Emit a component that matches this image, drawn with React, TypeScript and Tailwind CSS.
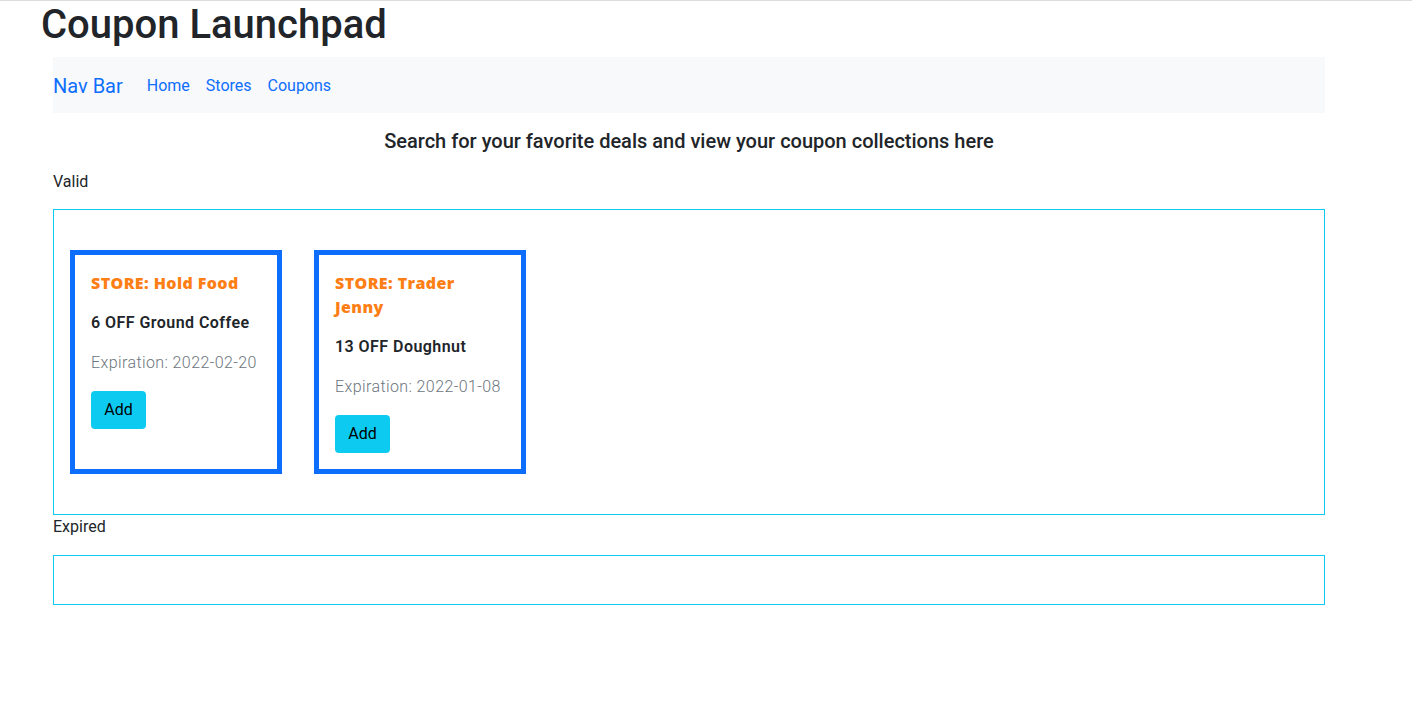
import React from "react";

const coupons = [
  { store: "Hold Food", title: "6 OFF Ground Coffee", exp: "2022-02-20" },
  { store: "Trader Jenny", title: "13 OFF Doughnut", exp: "2022-01-08" },
];

function Card({ store, title, exp }: { store: string; title: string; exp: string }) {
  return (
    <div className="w-[212px] border-[5px] border-[#0d6efd] p-4 flex flex-col items-start">
      <div className="max-w-[160px] text-[16px] leading-6 font-extrabold tracking-[0.4px] text-[#fd7e14] font-['Open_Sans','Roboto',sans-serif]">STORE: {store}</div>
      <div className="mt-4 text-[16px] leading-6 font-semibold tracking-[0.45px] text-[#212529]">{title}</div>
      <div className="mt-4 text-[16px] leading-6 font-light tracking-[0.4px] text-[#6c757d]">Expiration: {exp}</div>
      <button className="mt-4 h-[38px] w-[55px] rounded-[4px] bg-[#0dcaf0] text-[16px] text-black">Add</button>
    </div>
  );
}

export default function App() {
  return (
    <div className="min-h-[717px] bg-white border-t border-[#dcdcdc] text-[#212529] font-['Roboto','Noto_Sans',sans-serif]">
      <h1 className="ml-[41px] text-[40px] leading-[48px] font-medium mb-2">Coupon Launchpad</h1>
      <div className="mx-[53px] w-[1272px]">
        <nav className="h-14 bg-[#f8f9fa] flex items-center pt-px">
          <span className="text-[20px] text-[#0d6efd] mr-4">Nav Bar</span>
          <a className="px-2 text-[16px] text-[#0d6efd]">Home</a>
          <a className="px-2 text-[16px] text-[#0d6efd]">Stores</a>
          <a className="px-2 text-[16px] text-[#0d6efd]">Coupons</a>
        </nav>
        <h2 className="mt-4 text-center text-[20px] leading-6 font-medium">
          Search for your favorite deals and view your coupon collections here
        </h2>
        <div className="mt-4 text-[16px] leading-6 pt-px">Valid</div>
        <div className="mt-[15px] border border-[#0dcaf0] px-4 py-10 flex gap-8">
          {coupons.map((c) => (
            <Card key={c.store} {...c} />
          ))}
        </div>
        <div className="text-[16px] leading-6">Expired</div>
        <div className="mt-4 border border-[#0dcaf0] h-[50px]"></div>
      </div>
    </div>
  );
}
